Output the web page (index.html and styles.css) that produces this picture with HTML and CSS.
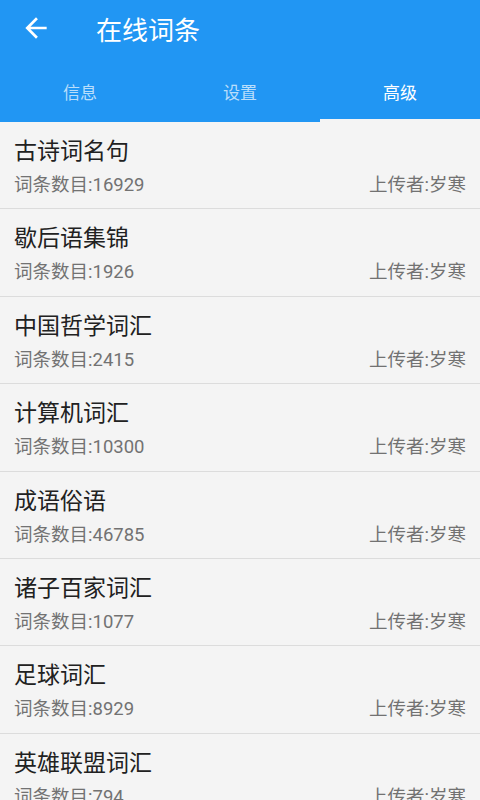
FILE: index.html
```html
<!DOCTYPE html>
<html>
<head>
    <meta charset="UTF-8">
    <title>在线词条</title>
    <link rel="stylesheet" href="styles.css">
</head>
<body>
    <header class="topo">
        <div class="barra">
            <svg class="voltar" viewBox="0 0 24 24">
                <path d="M20 11H7.83l5.59-5.59L12 4l-8 8 8 8 1.41-1.41L7.83 13H20v-2z" fill="#fff"/>
            </svg>
            <h1>在线词条</h1>
        </div>
        <nav class="abas">
            <div class="aba">信息</div>
            <div class="aba">设置</div>
            <div class="aba ativa">高级</div>
        </nav>
    </header>

    <div class="lista">
        <div class="item">
            <div class="nome">古诗词名句</div>
            <div class="info"><span>词条数目:16929</span><span>上传者:岁寒</span></div>
        </div>
        <div class="item">
            <div class="nome">歇后语集锦</div>
            <div class="info"><span>词条数目:1926</span><span>上传者:岁寒</span></div>
        </div>
        <div class="item">
            <div class="nome">中国哲学词汇</div>
            <div class="info"><span>词条数目:2415</span><span>上传者:岁寒</span></div>
        </div>
        <div class="item">
            <div class="nome">计算机词汇</div>
            <div class="info"><span>词条数目:10300</span><span>上传者:岁寒</span></div>
        </div>
        <div class="item">
            <div class="nome">成语俗语</div>
            <div class="info"><span>词条数目:46785</span><span>上传者:岁寒</span></div>
        </div>
        <div class="item">
            <div class="nome">诸子百家词汇</div>
            <div class="info"><span>词条数目:1077</span><span>上传者:岁寒</span></div>
        </div>
        <div class="item">
            <div class="nome">足球词汇</div>
            <div class="info"><span>词条数目:8929</span><span>上传者:岁寒</span></div>
        </div>
        <div class="item">
            <div class="nome">英雄联盟词汇</div>
            <div class="info"><span>词条数目:794</span><span>上传者:岁寒</span></div>
        </div>
    </div>
</body>
</html>
```

FILE: styles.css
```css
body {
    margin: 0;
    background-color: #f4f4f4;
    font-family: Roboto, "Noto Sans CJK SC", sans-serif;
    overflow: hidden;
}

.topo {
    background-color: #2196f3;
    color: #fff;
}

.barra {
    height: 56px;
    display: flex;
    align-items: center;
    padding-left: 20px;
}

.voltar {
    width: 32px;
    height: 32px;
}

h1 {
    margin: 0 0 0 44px;
    font-size: 26px;
    font-weight: normal;
}

.abas {
    display: flex;
    height: 66px;
}

.aba {
    flex: 1;
    display: flex;
    align-items: center;
    justify-content: center;
    padding-top: 8px;
    font-size: 17px;
    color: rgba(255, 255, 255, 0.7);
    border-bottom: 3px solid transparent;
    box-sizing: border-box;
}

.aba.ativa {
    color: #fff;
    border-bottom-color: #f4f4f4;
}

.item {
    height: 87.4px;
    border-bottom: 1px solid #dcdcdc;
    padding: 15px 14px 0;
    box-sizing: border-box;
}

.nome {
    font-size: 23px;
    color: #212121;
    line-height: 30px;
}

.info {
    display: flex;
    justify-content: space-between;
    font-size: 18.5px;
    color: #727272;
    line-height: 26px;
    margin-top: 5px;
}
```
